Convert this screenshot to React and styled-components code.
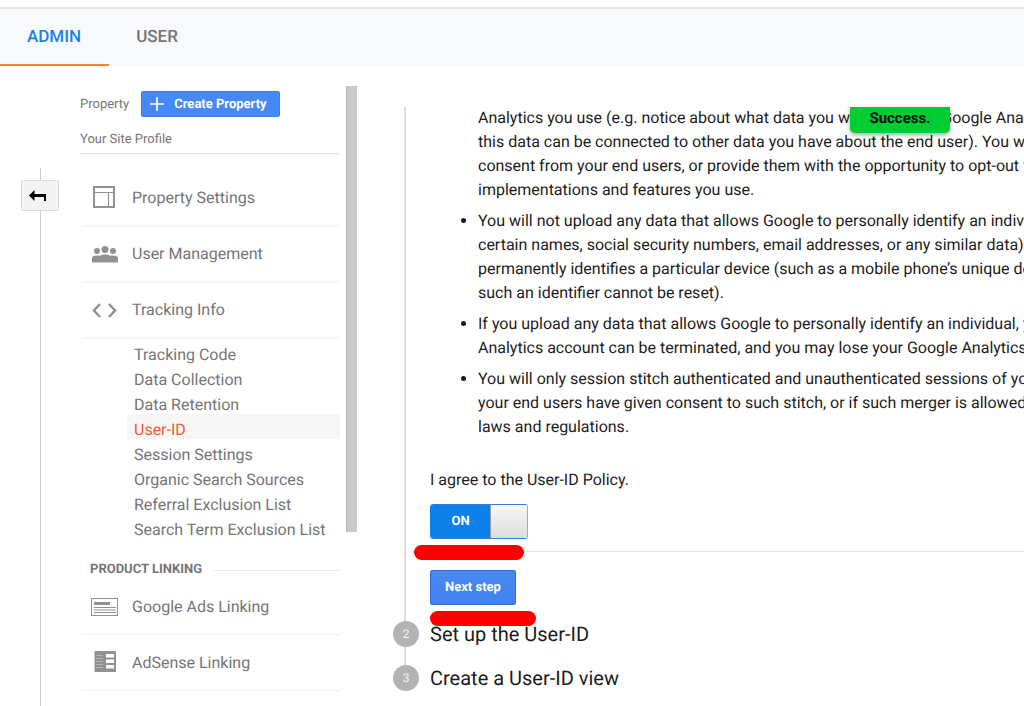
import React, { useState } from 'react';
import styled, { createGlobalStyle } from 'styled-components';

const GlobalStyle = createGlobalStyle`
  * {
    box-sizing: border-box;
  }
  body {
    margin: 0;
    background: #fff;
    font-family: Roboto, 'Liberation Sans', sans-serif;
    font-size: 16px;
    color: #1c1c1c;
    text-rendering: geometricPrecision;
  }
  button {
    font-family: inherit;
    text-rendering: inherit;
    cursor: pointer;
  }
`;

/* page */
const Page = styled.div`
  display: flex;
  flex-direction: column;
  min-height: 100vh;
  padding-top: 7px;
  overflow: hidden;
`;

const Tabs = styled.nav`
  display: flex;
  height: 59px;
  border-top: 2px solid #e6e6e6;
  background: #f8f9fb;
`;

const Tab = styled.a`
  padding: 0 28px 0 27px;
  font-size: 17px;
  line-height: 57px;
  font-weight: 500;
  text-decoration: none;
  color: ${(props) => (props.$active ? '#1a82ea' : '#757575')};
  box-shadow: ${(props) => (props.$active ? 'inset 0 -2px #f5803e' : 'none')};
`;

const Columns = styled.div`
  flex: 1;
  display: grid;
  grid-template-columns: 80px 260px 11px minmax(0, 1fr);
`;

/* back rail */
const Rail = styled.div`
  display: flex;
  flex-direction: column;
  align-items: center;
  padding-top: 102px;
`;

const RailLine = styled.div`
  width: 1px;
  background: #ccc;
  flex: ${(props) => (props.$short ? '0 0 12px' : '1')};
`;

const BackButton = styled.button`
  display: flex;
  align-items: center;
  justify-content: center;
  width: 38px;
  height: 31px;
  padding: 0 4px 0 0;
  border: 1px solid #dcdcdc;
  border-radius: 2px;
  background: #f3f3f3;
`;

/* property column */
const Sidebar = styled.aside`
  padding-top: 25px;
  color: #757575;
`;

const PropertyBar = styled.div`
  display: flex;
  align-items: center;
  gap: 12px;
  font-size: 13px;
`;

const CreateButton = styled.button`
  display: flex;
  align-items: center;
  gap: 10px;
  height: 26px;
  padding: 0 12px 0 8px;
  border: 1px solid #3b7ded;
  border-radius: 2px;
  background: #4688f4;
  color: #fff;
  font-size: 13px;
  font-weight: 700;
`;

const ProfileName = styled.div`
  height: 37px;
  margin-bottom: 16px;
  border-bottom: 1px solid #dcdcdc;
  font-size: 13px;
  line-height: 46px;
`;

const Item = styled.a`
  display: grid;
  grid-template-columns: 44px 1fr;
  align-items: center;
  height: 56px;
  margin-left: 2px;
  padding-left: 6px;
  border-bottom: 1px solid #efefef;
  color: inherit;
  text-decoration: none;

  svg {
    justify-self: start;
  }
`;

const SubList = styled.ul`
  list-style: none;
  margin: 1px 0 0 47px;
  padding: 0;
`;

const SubLink = styled.a`
  display: block;
  padding: 7px 0 0 7px;
  line-height: 18px;
  text-decoration: none;
  white-space: nowrap;
  background: ${(props) => (props.$active ? '#f6f6f6' : 'transparent')};
  color: ${(props) => (props.$active ? '#f0592f' : 'inherit')};
`;

const GroupTitle = styled.h2`
  display: flex;
  align-items: center;
  gap: 12px;
  margin: 22px 0 0 10px;
  font-size: 13px;
  font-weight: 700;
  line-height: 18px;

  &::after {
    content: '';
    flex: 1;
    height: 1px;
    background: #ebebeb;
  }
`;

const ScrollThumb = styled.div`
  height: 446px;
  margin: 20px 0 0 6px;
  width: 11px;
  border-left: 1px solid #b5b5b5;
  background: #c9c9c9;
`;

/* wizard */
const Wizard = styled.main`
  padding: 39px 0 0 42px;
`;

const Step = styled.section`
  display: grid;
  grid-template-columns: 25px minmax(0, 1fr);
  column-gap: 12px;
`;

const StepLine = styled.div`
  width: 2px;
  margin: 2px 0 0 11px;
  background: #dcdcdc;
`;

const Connector = styled.div`
  width: 2px;
  height: 18px;
  margin-left: 11px;
  background: #dcdcdc;
`;

const StepNumber = styled.div`
  width: 26px;
  height: 26px;
  border-radius: 50%;
  background: #b3b3b3;
  color: #f2f2f2;
  font-size: 12px;
  line-height: 26px;
  text-align: center;
`;

const StepTitle = styled.h3`
  margin: 0;
  font-size: 20px;
  font-weight: 400;
  line-height: 26px;
`;

const StepBody = styled.div`
  position: relative;
  padding-bottom: 16px;
`;

const Policy = styled.ul`
  display: flex;
  flex-direction: column;
  gap: 7px;
  margin: 0;
  padding: 1px 0 0 48px;
  line-height: 24px;
  white-space: nowrap;
  overflow: hidden;
`;

const Clause = styled.li`
  list-style: ${(props) => (props.$continued ? 'none' : 'disc')};
`;

const Toast = styled.div`
  position: absolute;
  top: 2px;
  left: 420px;
  width: 100px;
  height: 26px;
  border-radius: 0 0 5px 5px;
  background: #00cc33;
  box-shadow: 0 2px 4px rgba(0, 0, 0, 0.35);
  color: #111;
  font-size: 15px;
  font-weight: 700;
  line-height: 22px;
  text-align: center;
`;

const Agreement = styled.p`
  margin: 29px 0 12px;
  line-height: 24px;
`;

const Marked = styled.div`
  position: relative;
  width: fit-content;
`;

const Marker = styled.span`
  position: absolute;
  z-index: 1;
  top: 41px;
  left: ${(props) => props.$left}px;
  width: ${(props) => props.$width}px;
  height: 15px;
  border-radius: 8px;
  background: #fe0000;
`;

const Switch = styled.label`
  position: relative;
  display: flex;
  width: 98px;
  height: 35px;
  border: 1px solid #aaa;
  border-color: ${(props) => (props.$on ? '#2f7fd0 #aaa #2f7fd0 #0d80ea' : '#aaa')};
  border-radius: 3px;
  overflow: hidden;
  cursor: pointer;

  input {
    position: absolute;
    inset: 0;
    margin: 0;
    opacity: 0;
  }
`;

const SwitchText = styled.span`
  flex: 1;
  background: ${(props) => (props.$on ? '#0d80ea' : '#999')};
  color: #fff;
  font-size: 13px;
  font-weight: 700;
  line-height: 33px;
  text-align: center;
`;

const SwitchKnob = styled.span`
  width: 37px;
  border-left: 1px solid #999;
  box-shadow: 0 -1px #aaa, 0 1px #aaa;
  background: linear-gradient(#f7f7f7, #dcdcdc);
`;

const Divider = styled.hr`
  height: 1px;
  margin: 12px 0 18px;
  border: none;
  background: #e2e2e2;
`;

const NextButton = styled.button`
  display: block;
  width: 86px;
  height: 35px;
  padding: 0;
  border: 1px solid #2f6fd8;
  border-radius: 2px;
  background: linear-gradient(#4889f4, #3f83ee);
  color: #fff;
  font-size: 13px;
  font-weight: 700;
`;

const BackArrow = () => (
  <svg width="18" height="14" viewBox="0 0 18 14">
    <path d="M0 6.500 5.500 1v4H17v7h-2V8H5.500v4z" fill="#000" />
  </svg>
);

const PlusIcon = () => (
  <svg width="14" height="14" viewBox="0 0 14 14">
    <path d="M7 0v14M0 7h14" stroke="#fff" strokeWidth="1.600" />
  </svg>
);

const SettingsIcon = () => (
  <svg width="28" height="24" viewBox="0 0 28 24" fill="none" stroke="#919191">
    <rect x="6" y="1" width="20" height="20" strokeWidth="2" />
    <path d="M7 6.500h18M20.500 6.500v14" strokeWidth="1.200" />
  </svg>
);

const PeopleIcon = () => (
  <svg width="30" height="20" viewBox="0 0 30 20" fill="#919191">
    <circle cx="9" cy="7" r="3" />
    <circle cx="17" cy="5.500" r="3.500" />
    <circle cx="25" cy="7" r="3" />
    <path d="M4 18.500V14Q4 11.500 9 11.500q2 0 3 .3 2-1.300 5-1.300t5 1.300q1-.3 3-.3 5 0 5 2.500v4.500z" />
  </svg>
);

const CodeIcon = () => (
  <svg width="30" height="16" viewBox="0 0 30 16" fill="none" stroke="#919191" strokeWidth="2.500">
    <path d="m12 2-6 6.500 6 6.500M21 2l6 6.500-6 6.500" />
  </svg>
);

const AdsIcon = () => (
  <svg width="32" height="18" viewBox="0 0 32 18" fill="none" stroke="#919191">
    <rect x="3.500" y=".5" width="26" height="17" />
    <path d="M6 5.500h16" strokeWidth="3" />
    <path d="M6 9.500h22M6 12h22M6 14.500h22" />
  </svg>
);

const AdSenseIcon = () => (
  <svg width="28" height="24" viewBox="0 0 28 24">
    <path d="M6.500 0H28v21H6.500z" fill="#919191" />
    <path d="M18 3h8v3.500h-8zM18 8.500h8V12h-8zM18 14h8v3.500h-8z" fill="#fff" />
    <path d="M8 4.500h7M8 7.500h7M8 10.500h7M8 13.500h7M8 16.500h7" stroke="#b5b5b5" />
  </svg>
);

const propertyItems = [
  { label: 'Property Settings', icon: <SettingsIcon /> },
  { label: 'User Management', icon: <PeopleIcon /> },
  { label: 'Tracking Info', icon: <CodeIcon /> },
];

const trackingItems = [
  'Tracking Code',
  'Data Collection',
  'Data Retention',
  'User-ID',
  'Session Settings',
  'Organic Search Sources',
  'Referral Exclusion List',
  'Search Term Exclusion List',
];

const linkingItems = [
  { label: 'Google Ads Linking', icon: <AdsIcon /> },
  { label: 'AdSense Linking', icon: <AdSenseIcon /> },
];

const clauses = [
  [
    'Analytics you use (e.g. notice about what data you will collect via Google Analytics, and whether',
    'this data can be connected to other data you have about the end user). You will either get',
    'consent from your end users, or provide them with the opportunity to opt-out from the',
    'implementations and features you use.',
  ],
  [
    'You will not upload any data that allows Google to personally identify an individual (such as',
    'certain names, social security numbers, email addresses, or any similar data), or data that',
    'permanently identifies a particular device (such as a mobile phone’s unique device identifier if',
    'such an identifier cannot be reset).',
  ],
  [
    'If you upload any data that allows Google to personally identify an individual, your Google',
    'Analytics account can be terminated, and you may lose your Google Analytics data.',
  ],
  [
    'You will only session stitch authenticated and unauthenticated sessions of your end users if',
    'your end users have given consent to such stitch, or if such merger is allowed under applicable',
    'laws and regulations.',
  ],
];

function App() {
  const [agreed, setAgreed] = useState(true);
  const [current, setCurrent] = useState('User-ID');

  return (
    <Page>
      <GlobalStyle />
      <Tabs>
        <Tab href="#admin" $active>ADMIN</Tab>
        <Tab href="#user">USER</Tab>
      </Tabs>
      <Columns>
        <Rail>
          <RailLine $short />
          <BackButton aria-label="Back">
            <BackArrow />
          </BackButton>
          <RailLine />
        </Rail>

        <Sidebar>
          <PropertyBar>
            <span>Property</span>
            <CreateButton>
              <PlusIcon />
              Create Property
            </CreateButton>
          </PropertyBar>
          <ProfileName>Your Site Profile</ProfileName>
          {propertyItems.map((item) => (
            <Item key={item.label} href="#item">
              {item.icon}
              {item.label}
            </Item>
          ))}
          <SubList>
            {trackingItems.map((label) => (
              <li key={label}>
                <SubLink
                  href="#tracking"
                  $active={label === current}
                  onClick={() => setCurrent(label)}
                >
                  {label}
                </SubLink>
              </li>
            ))}
          </SubList>
          <GroupTitle>PRODUCT LINKING</GroupTitle>
          {linkingItems.map((item) => (
            <Item key={item.label} href="#item">
              {item.icon}
              {item.label}
            </Item>
          ))}
        </Sidebar>

        <ScrollThumb />

        <Wizard>
          <Step>
            <StepLine />
            <StepBody>
              <Policy>
                {clauses.map((lines, i) => (
                  <Clause key={lines[0]} $continued={i === 0}>
                    {lines.map((line) => (
                      <div key={line}>{line}</div>
                    ))}
                  </Clause>
                ))}
              </Policy>
              <Toast role="status">Success.</Toast>
              <Agreement id="agreement">I agree to the User-ID Policy.</Agreement>
              <Marked>
                <Switch $on={agreed}>
                  <input
                    type="checkbox"
                    aria-labelledby="agreement"
                    checked={agreed}
                    onChange={(e) => setAgreed(e.target.checked)}
                  />
                  <SwitchText $on={agreed}>{agreed ? 'ON' : 'OFF'}</SwitchText>
                  <SwitchKnob />
                </Switch>
                <Marker $left={-16} $width={110} />
              </Marked>
              <Divider />
              <Marked>
                <NextButton>Next step</NextButton>
                <Marker $left={0} $width={106} />
              </Marked>
            </StepBody>
          </Step>
          <Step>
            <StepNumber>2</StepNumber>
            <StepTitle>Set up the User-ID</StepTitle>
          </Step>
          <Connector />
          <Step>
            <StepNumber>3</StepNumber>
            <StepTitle>Create a User-ID view</StepTitle>
          </Step>
        </Wizard>
      </Columns>
    </Page>
  );
}

export default App;
